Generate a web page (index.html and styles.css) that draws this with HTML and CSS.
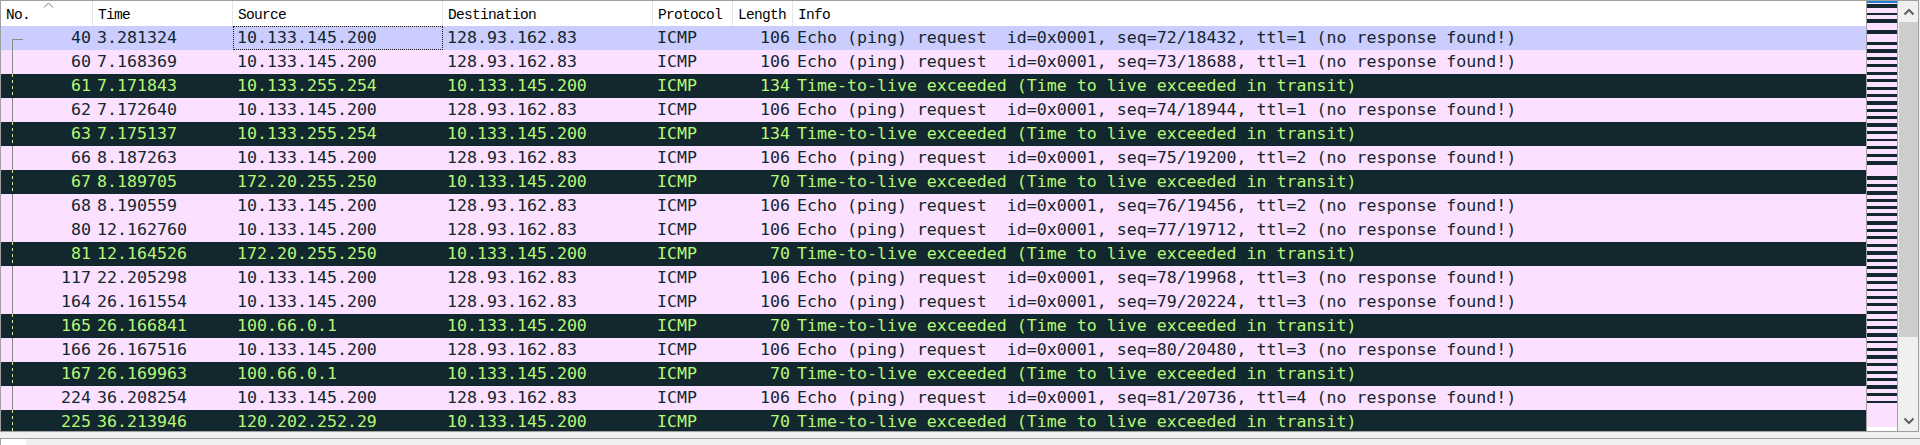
FILE: index.html
```html
<!DOCTYPE html>
<html>
<head>
<meta charset="utf-8">
<link rel="stylesheet" href="styles.css">
</head>
<body>
<div class="app">
  <div class="list">
    <div class="table">
      <div class="hdr">
        <div class="h c-no">No.<svg class="sort" width="11" height="6" viewBox="0 0 11 6"><polyline points="1,5.5 5.5,1 10,5.5" fill="none" stroke="#777" stroke-width="1"/></svg></div>
        <div class="h c-time">Time</div>
        <div class="h c-src">Source</div>
        <div class="h c-dst">Destination</div>
        <div class="h c-proto">Protocol</div>
        <div class="h c-len">Length</div>
        <div class="h c-info">Info</div>
      </div>

      <div class="row sel"><div class="c c-no"><span class="rel first"></span>40</div><div class="c c-time">3.281324</div><div class="c c-src focus">10.133.145.200</div><div class="c c-dst">128.93.162.83</div><div class="c c-proto">ICMP</div><div class="c c-len">106</div><div class="c c-info">Echo (ping) request  id=0x0001, seq=72/18432, ttl=1 (no response found!)</div></div>
      <div class="row req"><div class="c c-no"><span class="rel"></span>60</div><div class="c c-time">7.168369</div><div class="c c-src">10.133.145.200</div><div class="c c-dst">128.93.162.83</div><div class="c c-proto">ICMP</div><div class="c c-len">106</div><div class="c c-info">Echo (ping) request  id=0x0001, seq=73/18688, ttl=1 (no response found!)</div></div>
      <div class="row err"><div class="c c-no"><span class="rel"></span>61</div><div class="c c-time">7.171843</div><div class="c c-src">10.133.255.254</div><div class="c c-dst">10.133.145.200</div><div class="c c-proto">ICMP</div><div class="c c-len">134</div><div class="c c-info">Time-to-live exceeded (Time to live exceeded in transit)</div></div>
      <div class="row req"><div class="c c-no"><span class="rel"></span>62</div><div class="c c-time">7.172640</div><div class="c c-src">10.133.145.200</div><div class="c c-dst">128.93.162.83</div><div class="c c-proto">ICMP</div><div class="c c-len">106</div><div class="c c-info">Echo (ping) request  id=0x0001, seq=74/18944, ttl=1 (no response found!)</div></div>
      <div class="row err"><div class="c c-no"><span class="rel"></span>63</div><div class="c c-time">7.175137</div><div class="c c-src">10.133.255.254</div><div class="c c-dst">10.133.145.200</div><div class="c c-proto">ICMP</div><div class="c c-len">134</div><div class="c c-info">Time-to-live exceeded (Time to live exceeded in transit)</div></div>
      <div class="row req"><div class="c c-no"><span class="rel"></span>66</div><div class="c c-time">8.187263</div><div class="c c-src">10.133.145.200</div><div class="c c-dst">128.93.162.83</div><div class="c c-proto">ICMP</div><div class="c c-len">106</div><div class="c c-info">Echo (ping) request  id=0x0001, seq=75/19200, ttl=2 (no response found!)</div></div>
      <div class="row err"><div class="c c-no"><span class="rel"></span>67</div><div class="c c-time">8.189705</div><div class="c c-src">172.20.255.250</div><div class="c c-dst">10.133.145.200</div><div class="c c-proto">ICMP</div><div class="c c-len">70</div><div class="c c-info">Time-to-live exceeded (Time to live exceeded in transit)</div></div>
      <div class="row req"><div class="c c-no"><span class="rel"></span>68</div><div class="c c-time">8.190559</div><div class="c c-src">10.133.145.200</div><div class="c c-dst">128.93.162.83</div><div class="c c-proto">ICMP</div><div class="c c-len">106</div><div class="c c-info">Echo (ping) request  id=0x0001, seq=76/19456, ttl=2 (no response found!)</div></div>
      <div class="row req"><div class="c c-no"><span class="rel"></span>80</div><div class="c c-time">12.162760</div><div class="c c-src">10.133.145.200</div><div class="c c-dst">128.93.162.83</div><div class="c c-proto">ICMP</div><div class="c c-len">106</div><div class="c c-info">Echo (ping) request  id=0x0001, seq=77/19712, ttl=2 (no response found!)</div></div>
      <div class="row err"><div class="c c-no"><span class="rel"></span>81</div><div class="c c-time">12.164526</div><div class="c c-src">172.20.255.250</div><div class="c c-dst">10.133.145.200</div><div class="c c-proto">ICMP</div><div class="c c-len">70</div><div class="c c-info">Time-to-live exceeded (Time to live exceeded in transit)</div></div>
      <div class="row req"><div class="c c-no"><span class="rel"></span>117</div><div class="c c-time">22.205298</div><div class="c c-src">10.133.145.200</div><div class="c c-dst">128.93.162.83</div><div class="c c-proto">ICMP</div><div class="c c-len">106</div><div class="c c-info">Echo (ping) request  id=0x0001, seq=78/19968, ttl=3 (no response found!)</div></div>
      <div class="row req"><div class="c c-no"><span class="rel"></span>164</div><div class="c c-time">26.161554</div><div class="c c-src">10.133.145.200</div><div class="c c-dst">128.93.162.83</div><div class="c c-proto">ICMP</div><div class="c c-len">106</div><div class="c c-info">Echo (ping) request  id=0x0001, seq=79/20224, ttl=3 (no response found!)</div></div>
      <div class="row err"><div class="c c-no"><span class="rel"></span>165</div><div class="c c-time">26.166841</div><div class="c c-src">100.66.0.1</div><div class="c c-dst">10.133.145.200</div><div class="c c-proto">ICMP</div><div class="c c-len">70</div><div class="c c-info">Time-to-live exceeded (Time to live exceeded in transit)</div></div>
      <div class="row req"><div class="c c-no"><span class="rel"></span>166</div><div class="c c-time">26.167516</div><div class="c c-src">10.133.145.200</div><div class="c c-dst">128.93.162.83</div><div class="c c-proto">ICMP</div><div class="c c-len">106</div><div class="c c-info">Echo (ping) request  id=0x0001, seq=80/20480, ttl=3 (no response found!)</div></div>
      <div class="row err"><div class="c c-no"><span class="rel"></span>167</div><div class="c c-time">26.169963</div><div class="c c-src">100.66.0.1</div><div class="c c-dst">10.133.145.200</div><div class="c c-proto">ICMP</div><div class="c c-len">70</div><div class="c c-info">Time-to-live exceeded (Time to live exceeded in transit)</div></div>
      <div class="row req"><div class="c c-no"><span class="rel"></span>224</div><div class="c c-time">36.208254</div><div class="c c-src">10.133.145.200</div><div class="c c-dst">128.93.162.83</div><div class="c c-proto">ICMP</div><div class="c c-len">106</div><div class="c c-info">Echo (ping) request  id=0x0001, seq=81/20736, ttl=4 (no response found!)</div></div>
      <div class="row err"><div class="c c-no"><span class="rel"></span>225</div><div class="c c-time">36.213946</div><div class="c c-src">120.202.252.29</div><div class="c c-dst">10.133.145.200</div><div class="c c-proto">ICMP</div><div class="c c-len">70</div><div class="c c-info">Time-to-live exceeded (Time to live exceeded in transit)</div></div>
    </div>

    <div class="minimap">
      <svg class="map" width="30" height="426" viewBox="0 0 30 426" shape-rendering="crispEdges">
        <rect x="0" y="0" width="30" height="426" fill="#fce0ff"/>
        <rect x="0" y="0" width="30" height="2" fill="#1f7fd6"/>
        <g fill="#12272e">
          <rect x="0" y="3" width="30" height="4"/>
          <rect x="0" y="12" width="30" height="2"/>
          <rect x="0" y="18" width="30" height="4"/>
          <rect x="0" y="29" width="30" height="4"/>
          <rect x="0" y="41" width="30" height="3"/>
          <rect x="0" y="48" width="30" height="4"/>
          <rect x="0" y="56" width="30" height="3"/>
          <rect x="0" y="63" width="30" height="3"/>
          <rect x="0" y="71" width="30" height="3"/>
          <rect x="0" y="78" width="30" height="3"/>
          <rect x="0" y="86" width="30" height="3"/>
          <rect x="0" y="93" width="30" height="3"/>
          <rect x="0" y="100" width="30" height="4"/>
          <rect x="0" y="108" width="30" height="3"/>
          <rect x="0" y="115" width="30" height="3"/>
          <rect x="0" y="122" width="30" height="4"/>
          <rect x="0" y="130" width="30" height="3"/>
          <rect x="0" y="138" width="30" height="2"/>
          <rect x="0" y="145" width="30" height="3"/>
          <rect x="0" y="153" width="30" height="3"/>
          <rect x="0" y="160" width="30" height="4"/>
          <rect x="0" y="175" width="30" height="4"/>
          <rect x="0" y="183" width="30" height="3"/>
          <rect x="0" y="190" width="30" height="4"/>
          <rect x="0" y="198" width="30" height="3"/>
          <rect x="0" y="205" width="30" height="3"/>
          <rect x="0" y="212" width="30" height="3"/>
          <rect x="0" y="220" width="30" height="4"/>
          <rect x="0" y="228" width="30" height="3"/>
          <rect x="0" y="235" width="30" height="3"/>
          <rect x="0" y="243" width="30" height="3"/>
          <rect x="0" y="250" width="30" height="4"/>
          <rect x="0" y="258" width="30" height="3"/>
          <rect x="0" y="265" width="30" height="3"/>
          <rect x="0" y="272" width="30" height="4"/>
          <rect x="0" y="280" width="30" height="3"/>
          <rect x="0" y="288" width="30" height="2"/>
          <rect x="0" y="295" width="30" height="3"/>
          <rect x="0" y="302" width="30" height="3"/>
          <rect x="0" y="310" width="30" height="3"/>
          <rect x="0" y="318" width="30" height="2"/>
          <rect x="0" y="325" width="30" height="3"/>
          <rect x="0" y="332" width="30" height="4"/>
          <rect x="0" y="340" width="30" height="2"/>
          <rect x="0" y="347" width="30" height="3"/>
          <rect x="0" y="354" width="30" height="4"/>
          <rect x="0" y="362" width="30" height="3"/>
          <rect x="0" y="370" width="30" height="3"/>
          <rect x="0" y="377" width="30" height="3"/>
          <rect x="0" y="384" width="30" height="4"/>
          <rect x="0" y="392" width="30" height="3"/>
          <rect x="0" y="400" width="30" height="2"/>
        </g>
      </svg>
    </div>

    <div class="vscroll">
      <div class="sbtn"><svg width="12" height="8" viewBox="0 0 12 8"><polyline points="1.5,6.5 6,2 10.5,6.5" fill="none" stroke="#606060" stroke-width="2"/></svg></div>
      <div class="thumb"></div>
      <div class="track"></div>
      <div class="sbtn"><svg width="12" height="8" viewBox="0 0 12 8"><polyline points="1.5,1.5 6,6 10.5,1.5" fill="none" stroke="#606060" stroke-width="2"/></svg></div>
    </div>
  </div>

  <div class="splitter"></div>

  <div class="details">
    <div class="gutter"></div>
    <div class="dtext">Frame 40: 106 bytes on wire (848 bits), 106 bytes captured (848 bits) on interface \Device\NPF_{4bd0f1a8-7f2e-4d1b}, id 0</div>
  </div>
</div>
</body>
</html>
```

FILE: styles.css
```css
html, body {
  margin: 0;
  padding: 0;
  background: #f0f0f0;
  overflow: hidden;
}

.app {
  width: 1920px;
  height: 445px;
  display: flex;
  flex-direction: column;
  overflow: hidden;
}

.list {
  width: 1919px;
  height: 432px;
  box-sizing: border-box;
  border: 1px solid #a0a0a0;
  display: flex;
  flex: none;
  background: #ffffff;
}

.table {
  width: 1865px;
  flex: none;
  overflow: hidden;
  display: flex;
  flex-direction: column;
}

.hdr {
  height: 25px;
  flex: none;
  display: flex;
  background: #ffffff;
}

.h {
  box-sizing: border-box;
  height: 25px;
  border-right: 1px solid #e5e5e5;
  padding: 4px 0 0 5px;
  font-family: "Liberation Mono", monospace;
  font-size: 14.5px;
  letter-spacing: -0.7px;
  line-height: 21px;
  color: #000;
  white-space: pre;
  position: relative;
}

.h.c-info {
  border-right: none;
}

.sort {
  position: absolute;
  left: 42px;
  top: 1px;
}

.row {
  height: 24px;
  flex: none;
  display: flex;
  font-family: "DejaVu Sans Mono", monospace;
  font-size: 16.6px;
  line-height: 24px;
  white-space: pre;
}

.row.req {
  background: #fce0ff;
  color: #12272e;
}

.row.err {
  background: #12272e;
  color: #b7f774;
}

.row.sel {
  background: #cacdfe;
  color: #12272e;
}

.c {
  box-sizing: border-box;
  height: 24px;
  padding-left: 4px;
  overflow: hidden;
}

.c-no {
  width: 92px;
  flex: none;
  text-align: right;
  padding-left: 0;
  padding-right: 2px;
  position: relative;
}

.h.c-no {
  text-align: left;
  padding-left: 5px;
}

.c-time { width: 140px; flex: none; }
.c-src { width: 210px; flex: none; }
.c-dst { width: 210px; flex: none; }
.c-proto { width: 80px; flex: none; }
.c-len {
  width: 60px;
  flex: none;
  text-align: right;
  padding-left: 0;
  padding-right: 3px;
}
.h.c-len {
  text-align: left;
  padding-left: 5px;
  padding-right: 0;
}
.c-info { flex: 1; }

.focus {
  outline: 1px dotted #1a1a1a;
  outline-offset: -1px;
}

.rel {
  position: absolute;
  left: 11px;
  top: 0;
  width: 1px;
  height: 24px;
  background: #8a8a8a;
}

.rel.first {
  top: 13px;
  height: 11px;
  width: 11px;
  background: none;
  border-top: 1px solid #8a8a8a;
  border-left: 1px solid #8a8a8a;
  box-sizing: border-box;
}

.row.err .rel {
  background: repeating-linear-gradient(to bottom, #dcefa6 0, #dcefa6 3px, transparent 3px, transparent 6px);
}

.minimap {
  width: 32px;
  flex: none;
  box-sizing: border-box;
  border-left: 1px solid #a0a0a0;
  border-right: 1px solid #a0a0a0;
  background: #ffffff;
  overflow: hidden;
}

.map {
  display: block;
}

.vscroll {
  width: 20px;
  flex: none;
  box-sizing: border-box;
  padding-left: 1px;
  background: #f0f0f0;
  display: flex;
  flex-direction: column;
}

.sbtn {
  height: 21px;
  flex: none;
  display: flex;
  align-items: center;
  justify-content: center;
}

.thumb {
  height: 315px;
  flex: none;
  background: #cdcdcd;
}

.track {
  flex: 1;
}

.splitter {
  height: 6px;
  flex: none;
  background: #f0f0f0;
}

.details {
  flex: 1;
  display: flex;
  border-top: 1px solid #a0a0a0;
  border-left: 1px solid #a0a0a0;
  background: #f0f0f0;
  overflow: hidden;
}

.gutter {
  width: 25px;
  flex: none;
  background: #ffffff;
}

.dtext {
  padding-left: 140px;
  padding-top: 4px;
  font-family: "DejaVu Sans Mono", monospace;
  font-size: 16.6px;
  line-height: 22px;
  color: #1a1a1a;
  white-space: pre;
}
```
